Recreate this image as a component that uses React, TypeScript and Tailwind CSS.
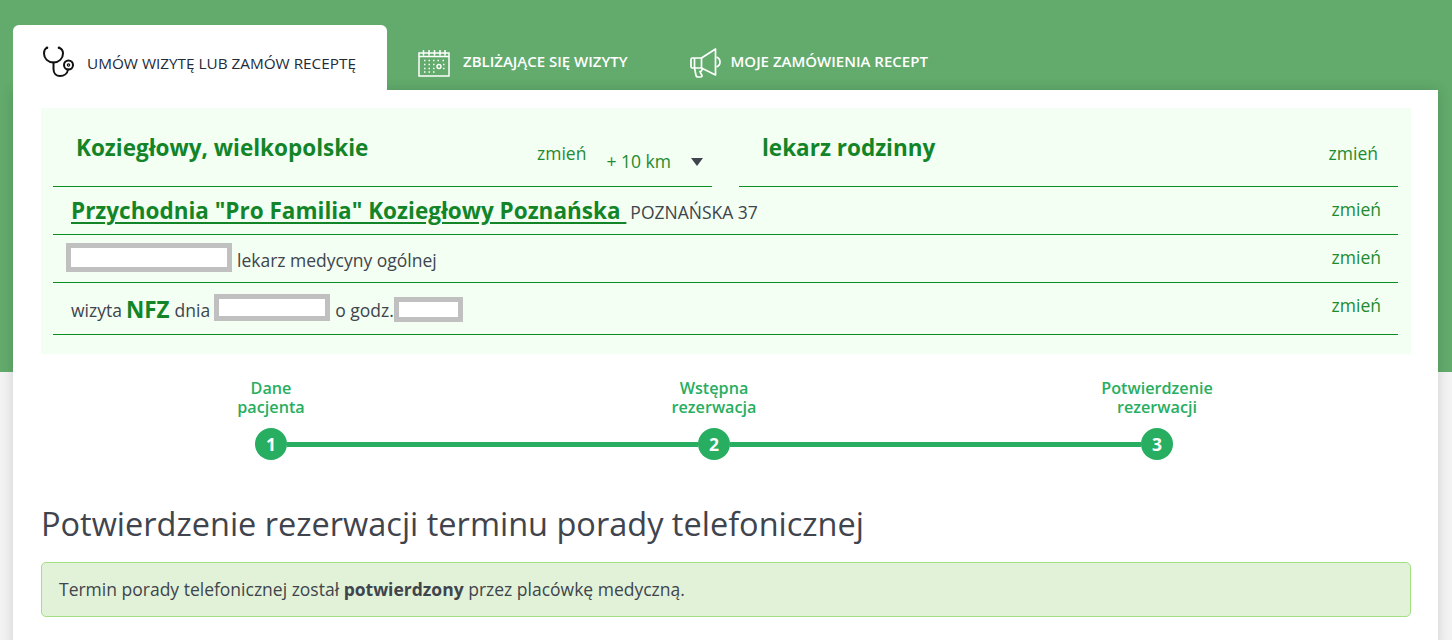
const Stethoscope = () => (
  <svg className="-mt-[3px]" width="32" height="32" viewBox="0 0 32 32" fill="none" stroke="#111" strokeWidth="2" strokeLinecap="round">
    <path d="M3.500 2C1.800 3 1 5 1 7.500C1 12.500 5 16.500 10.500 16.500C16 16.500 20 12.500 20 7.500C20 5 19 3 16.500 2" />
    <circle cx="4" cy="1.800" r="1.300" fill="#111" stroke="none" />
    <circle cx="16" cy="1.800" r="1.300" fill="#111" stroke="none" />
    <path d="M10.500 16.500V23C10.500 27.500 13.500 30 17 30C21 30 24.500 27.500 25 23.500" />
    <circle cx="25.500" cy="19" r="4.500" />
    <circle cx="25.500" cy="19" r="1.200" strokeWidth="1.200" />
  </svg>
);

const CalendarIcon = () => (
  <svg width="32" height="28" viewBox="0 0 32 28" fill="none" stroke="#fff" strokeWidth="1.500">
    <rect x="1" y="4" width="30" height="23" />
    <path d="M1 7.500H31M5.500 1V6.500M11 1V6.500M16.500 1V6.500M22 1V6.500M27 1V6.500" />
    <path
      d="M6 11.500h1.500M10.500 11.500h1.500M15 11.500h1.500M19.500 11.500h1.500M24.500 11.500h1.500M6 15.500h1.500M10.500 15.500h1.500M15 15.500h1.500M25 15.500h1.500M6 19.500h1.500M10.500 19.500h1.500M15 19.500h1.500M25 19.500h1.500M6 23h1.500M10.500 23h1.500M15 23h1.500"
      strokeWidth="1.500"
    />
    <circle cx="21" cy="17.500" r="2" strokeWidth="1.400" />
  </svg>
);

const MegaphoneIcon = () => (
  <svg width="31" height="30" viewBox="0 0 31 30" fill="none" stroke="#fff" strokeWidth="1.700" strokeLinejoin="round">
    <path d="M2.500 10H11.500L25.500 1V27L11.500 20H2.500C1.500 20 1 19.500 1 18.500V11.500C1 10.500 1.500 10 2.500 10Z" />
    <path d="M4.500 10V20M11.500 10V20" />
    <path d="M4.500 20L6 27.500C6.200 28.700 7 29 8 29H10.500C11.700 29 12.300 28.200 11.900 27.300L10 23.500C11.500 23.500 12.500 22 12 20.300" />
    <path d="M26.500 9C29 10 30 12 30 14C30 16 29 18 26.500 19" />
  </svg>
);

const Redacted = ({ className }: { className: string }) => (
  <span className={`inline-block bg-white border-[5px] border-[#c0c0c0] ${className}`} />
);

const Change = ({ className = '' }: { className?: string }) => (
  <a className={`text-[#1f8a2f] text-[17.5px] leading-[22px] ${className}`}>zmień</a>
);

const steps = [
  { n: 1, label: ['Dane', 'pacjenta'] },
  { n: 2, label: ['Wstępna', 'rezerwacja'] },
  { n: 3, label: ['Potwierdzenie', 'rezerwacji'] },
];

const StepCircle = ({ n }: { n: number }) => (
  <div className="w-8 h-8 shrink-0 rounded-full bg-[#27ae60] text-white font-bold text-[17.5px] flex items-center justify-center">
    {n}
  </div>
);

export default function App() {
  return (
    <div
      className="min-h-screen h-[640px] overflow-hidden bg-[linear-gradient(#62ab6c_372px,#f3f3f3_372px)] pt-[25px] pl-[13px] pr-[14px] text-[#3f444d]"
      style={{ fontFamily: '"Open Sans", sans-serif' }}
    >
      {/* Tabs */}
      <div className="flex h-[65px]">
        <div className="w-[374px] bg-white rounded-t-[6px] flex items-center pl-[30px] pt-[12px] text-[#222b3a] text-[15.300px] font-medium">
          <Stethoscope />
          <span className="ml-[12px]">UMÓW WIZYTĘ LUB ZAMÓW RECEPTĘ</span>
        </div>
        <div className="flex items-center pl-[31px] pt-[10px] text-white text-[15px] font-semibold w-[272px]">
          <CalendarIcon />
          <span className="ml-[13px] -mt-[3px]">ZBLIŻAJĄCE SIĘ WIZYTY</span>
        </div>
        <div className="flex items-center pl-[31px] pt-[10px] text-white text-[15px] font-semibold">
          <MegaphoneIcon />
          <span className="ml-[9.500px] -mt-[3px]">MOJE ZAMÓWIENIA RECEPT</span>
        </div>
      </div>

      {/* Content */}
      <div className="bg-white h-[560px] pt-[18px] pl-[28px] pr-[27px] shadow-[0_0_12px_rgba(0,0,0,0.15)]">
        <div className="h-[246px] bg-[#f2fff2] pl-[12px] pr-[13px] flex flex-col">
          <div className="flex h-[79px]">
            <div className="w-[659px] border-b border-[#0c8f22] flex pl-[23px]">
              <span className="mt-[23px] text-[#138528] text-[22.500px] leading-[34px] font-bold w-[461px]">
                Koziegłowy, wielkopolskie
              </span>
              <Change className="mt-[34px]" />
              <span className="ml-[20px] mt-[42px] text-[#1f8a2f] text-[17.500px] leading-[22px]">+ 10 km</span>
              <span className="ml-[20px] mt-[50px] w-0 h-0 border-x-[6px] border-x-transparent border-t-[8px] border-t-[#3f444d]" />
            </div>
            <div className="ml-[27px] flex-1 border-b border-[#0c8f22] flex justify-between pl-[23px] pr-[20px]">
              <span className="mt-[23px] text-[#138528] text-[22.500px] leading-[34px] font-bold">
                lekarz rodzinny
              </span>
              <Change className="mt-[34px]" />
            </div>
          </div>

          <div className="h-[48px] border-b border-[#0c8f22] flex justify-between pl-[18px] pr-[17px]">
            <div className="mt-[7px] flex items-baseline">
              <a className="text-[#138528] text-[22.500px] leading-[34px] font-bold underline underline-offset-[3px]">
                Przychodnia "Pro Familia" Koziegłowy Poznańska&nbsp;
              </a>
              <span className="ml-[4px] text-[17.500px]">POZNAŃSKA 37</span>
            </div>
            <Change className="mt-[11px]" />
          </div>

          <div className="h-[48px] border-b border-[#0c8f22] flex justify-between pl-[13px] pr-[17px]">
            <div className="flex items-center">
              <Redacted className="-mt-[2px] w-[166px] h-[29px]" />
              <span className="ml-[5px] mt-[4px] text-[17.500px]">lekarz medycyny ogólnej</span>
            </div>
            <Change className="mt-[11px]" />
          </div>

          <div className="h-[52px] border-b border-[#0c8f22] flex justify-between pl-[18px] pr-[17px]">
            <div className="flex items-center whitespace-nowrap text-[17.500px]">
              <span className="mt-[3px]">wizyta</span>
              <span className="ml-[4px] text-[#138528] text-[22.500px] font-bold mt-[3px]">NFZ</span>
              <span className="ml-[5px] mt-[3px]">dnia</span>
              <Redacted className="ml-[4px] -mt-[2px] w-[116px] h-[27px]" />
              <span className="ml-[5px] mt-[3px]">o godz.</span>
              <Redacted className="mt-[1px] w-[69px] h-[25px]" />
            </div>
            <Change className="mt-[11px]" />
          </div>
        </div>

        {/* Stepper */}
        <div className="ml-[8.500px] w-[1329px] mt-[25px]">
          <div className="grid grid-cols-3">
            {steps.map(s => (
              <div key={s.n} className="text-center text-[#27ae60] text-[16.200px] leading-[19px] font-semibold">
                {s.label[0]}
                <br />
                {s.label[1]}
              </div>
            ))}
          </div>
          <div className="flex items-center px-[205.500px] mt-[11px]">
            <StepCircle n={1} />
            <div className="flex-1 h-[5px] bg-[#27ae60]" />
            <StepCircle n={2} />
            <div className="flex-1 h-[5px] bg-[#27ae60]" />
            <StepCircle n={3} />
          </div>
        </div>

        <h1 className="mt-[42px] text-[32.500px] leading-[44px] font-normal">
          Potwierdzenie rezerwacji terminu porady telefonicznej
        </h1>

        <div className="mt-[16px] h-[55px] bg-[#e1f2d8] border border-[#a2e082] rounded-[5px] pl-[17px] flex items-center text-[17.500px]">
          <span>
            Termin porady telefonicznej został <b className="font-bold">potwierdzony</b> przez placówkę medyczną.
          </span>
        </div>
      </div>
    </div>
  );
}
